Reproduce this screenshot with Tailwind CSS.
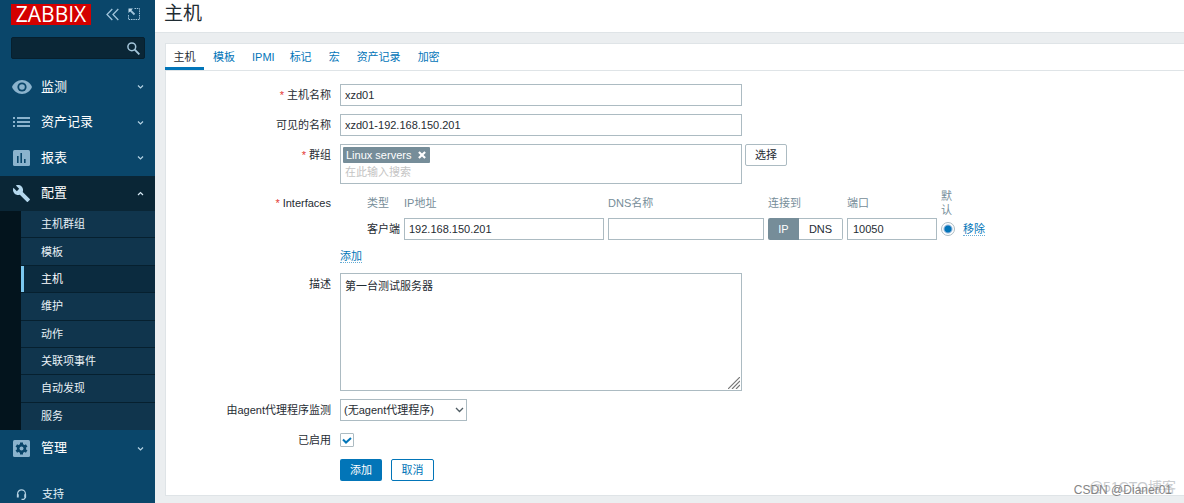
<!DOCTYPE html>
<html lang="zh-CN">
<head>
<meta charset="utf-8">
<title>主机</title>
<meta name="viewport" content="width=device-width, initial-scale=1">
<script src="https://cdn.jsdelivr.net/npm/@tailwindcss/browser@4"></script>
</head>
<body class="relative flex min-h-screen overflow-x-hidden bg-[#ebeef0] font-['Liberation_Sans','Noto_Sans_CJK_SC',sans-serif] text-[11px] leading-[14px] text-[#1f2c33]">

<aside class="flex w-[155px] shrink-0 flex-col bg-[#0a466a] text-[#e4f1f8]">
  <div class="flex h-7 items-center pl-[11px]">
    <a href="#" aria-label="ZABBIX" class="flex h-[21px] w-20 items-center justify-center bg-[#d40000] font-['Open_Sans','Liberation_Sans',sans-serif] text-[21px] leading-[21px] text-white">ZABBIX</a>
    <button type="button" aria-label="收起" class="ml-[15px]"><svg class="size-[13px]" viewBox="0 0 13 13" fill="none" stroke="#9fc3da" stroke-width="1.3"><path d="M6.3 1 1 6.5l5.300 5.500M12.300 1 7 6.500l5.300 5.500"/></svg></button>
    <button type="button" aria-label="隐藏" class="ml-[9px]"><svg class="size-3" viewBox="0 0 12 12" fill="none" stroke="#9fc3da"><path d="M6.500.500h5v11H.500V6.500" stroke-dasharray="1.500 .8"/><path d="M2 2l4.500 4.500" stroke-width="1.800"/><path d="M.5.500h4.500l-4.500 4.500z" fill="#c4dceb" stroke="none"/></svg></button>
  </div>
  <form class="mx-[11px] mt-[9px] mr-[10px] flex h-[22px] items-center rounded-[2px] border border-[#06202f] bg-[#0a2636] pr-1">
    <input type="text" aria-label="搜索" class="h-full min-w-0 flex-1 bg-transparent px-1 outline-none">
    <button type="button" aria-label="搜索"><svg class="size-[13px]" viewBox="0 0 13 13" fill="none" stroke="#a3c5da"><circle cx="4.800" cy="4.800" r="3.900" stroke-width="1.500"/><path d="M7.700 7.700l4.700 4.700" stroke-width="1.900"/></svg></button>
  </form>
  <nav class="mt-[10px]">
    <div class="grid h-[142px] grid-rows-4 text-[13px] text-white">
      <a href="#" class="flex items-center pr-[11px] pl-3"><svg class="h-[14px] w-5" viewBox="0 0 20 14"><path d="M10 0C5.500 0 1.600 2.900 0 7c1.600 4.100 5.500 7 10 7s8.400-2.900 10-7c-1.600-4.100-5.500-7-10-7z" fill="#8bb3cd"/><circle cx="10" cy="7" r="4.600" fill="#0a466a"/><circle cx="10" cy="7" r="2.800" fill="#8bb3cd"/></svg><span class="ml-[9px] flex-1">监测</span><svg class="size-[7px]" viewBox="0 0 7 7" fill="none" stroke="#b5d2e3" stroke-width="1.200"><path d="M1 2.500l2.500 2.500L6 2.500"/></svg></a>
      <a href="#" class="flex items-center pr-[11px] pl-[13px]"><svg class="h-[10px] w-[17px]" viewBox="0 0 17 10" fill="#8bb3cd"><path d="M0 0h2v2H0zM4 0h13v2H4zM0 4h2v2H0zM4 4h13v2H4zM0 8h2v2H0zM4 8h13v2H4z"/></svg><span class="ml-[11px] flex-1">资产记录</span><svg class="size-[7px]" viewBox="0 0 7 7" fill="none" stroke="#b5d2e3" stroke-width="1.200"><path d="M1 2.500l2.500 2.500L6 2.500"/></svg></a>
      <a href="#" class="flex items-center pr-[11px] pl-[13px]"><svg class="h-4 w-[17px]" viewBox="0 0 17 16"><rect width="17" height="16" rx="1.500" fill="#8bb3cd"/><path d="M4 6h1.600v7H4zM7.400 3H9v10H7.400zM11 9h1.600v4H11z" fill="#0a466a"/></svg><span class="ml-[11px] flex-1">报表</span><svg class="size-[7px]" viewBox="0 0 7 7" fill="none" stroke="#b5d2e3" stroke-width="1.200"><path d="M1 2.500l2.500 2.500L6 2.500"/></svg></a>
      <a href="#" class="flex items-center bg-[#0a2636] pr-[11px] pl-[13px]"><svg class="size-[17px]" viewBox="1 1 22 22" fill="#b5d8ee"><path d="M22.700 19l-9.100-9.100c.9-2.300.4-5-1.500-6.900-2-2-5-2.400-7.400-1.300L9 6 6 9 1.600 4.700C.4 7.100.9 10.100 2.900 12.100c1.900 1.900 4.600 2.400 6.900 1.500l9.100 9.100c.4.4 1 .4 1.400 0l2.300-2.300c.5-.4.5-1.100.1-1.400z"/></svg><span class="ml-[11px] flex-1">配置</span><svg class="size-[7px]" viewBox="0 0 7 7" fill="none" stroke="#d5e8f3" stroke-width="1.200"><path d="M1 5l2.500-2.500L6 5"/></svg></a>
    </div>
    <div class="grid h-[219px] grid-rows-8 bg-[#03141d] pl-[21px] text-[#e8f1f6]">
      <a href="#" class="flex items-center border-b border-[#06202f] bg-[#10354d] pl-5">主机群组</a>
      <a href="#" class="flex items-center border-b border-[#06202f] bg-[#10354d] pl-5">模板</a>
      <a href="#" class="flex items-center border-b border-[#06202f] bg-[#0b2b3f] text-white"><span class="w-[3px] self-stretch bg-[#7cc8ef]"></span><span class="pl-[17px]">主机</span></a>
      <a href="#" class="flex items-center border-b border-[#06202f] bg-[#10354d] pl-5">维护</a>
      <a href="#" class="flex items-center border-b border-[#06202f] bg-[#10354d] pl-5">动作</a>
      <a href="#" class="flex items-center border-b border-[#06202f] bg-[#10354d] pl-5">关联项事件</a>
      <a href="#" class="flex items-center border-b border-[#06202f] bg-[#10354d] pl-5">自动发现</a>
      <a href="#" class="flex items-center bg-[#10354d] pl-5">服务</a>
    </div>
    <a href="#" class="flex h-9 items-center pr-[11px] pl-[13px] text-[13px] text-white"><svg class="size-[17px]" viewBox="0 0 17 17"><rect width="17" height="17" rx="1.500" fill="#8bb3cd"/><g fill="#0a466a"><circle cx="8.500" cy="8.500" r="4.600"/><rect x="7" y="2.500" width="3" height="12"/><rect x="7" y="2.500" width="3" height="12" transform="rotate(60 8.500 8.500)"/><rect x="7" y="2.500" width="3" height="12" transform="rotate(120 8.500 8.500)"/></g><circle cx="8.500" cy="8.500" r="2" fill="#8bb3cd"/></svg><span class="ml-[11px] flex-1">管理</span><svg class="size-[7px]" viewBox="0 0 7 7" fill="none" stroke="#b5d2e3" stroke-width="1.200"><path d="M1 2.500l2.500 2.500L6 2.500"/></svg></a>
    <a href="#" class="mt-5 flex h-4 items-center pl-4"><svg class="size-[11px]" viewBox="0 0 11 11" fill="none" stroke="#b5d2e3" stroke-width="1.200"><path d="M1.600 7V4.800a3.900 3.900 0 0 1 7.800 0V8.500L7.800 10.300H5.500"/><path d="M1.800 5.200v3.200M9.200 5.200v3.200" stroke-width="1.900"/></svg><span class="ml-[15px]">支持</span></a>
  </nav>
</aside>

<main class="flex min-w-0 flex-1 flex-col">
  <header class="flex h-[33px] items-start border-b border-[#dfe4e7] bg-white pt-[3px] pl-[9px]">
    <h1 class="text-[19px] leading-[22px]">主机</h1>
  </header>
  <section class="mt-[10px] ml-[10px] border border-r-0 border-[#dfe4e7] bg-white pb-[14px]">
    <nav class="flex h-[27px] items-stretch border-b border-[#dfe4e7] text-[#0275b8]">
      <a href="#" class="-ml-px flex w-[39px] items-center justify-center border-y-[3px] border-t-transparent border-b-[#0275b8] text-[#1f2c33]">主机</a>
      <a href="#" class="ml-[9px] flex items-center">模板</a>
      <a href="#" class="ml-[17px] flex items-center">IPMI</a>
      <a href="#" class="ml-[15px] flex items-center">标记</a>
      <a href="#" class="ml-[17px] flex items-center">宏</a>
      <a href="#" class="ml-[17px] flex items-center">资产记录</a>
      <a href="#" class="ml-[17px] flex items-center">加密</a>
    </nav>
    <form class="grid grid-cols-[165px_minmax(0,1fr)] gap-x-[9px] gap-y-2 pt-[13px]">
      <label for="host" class="pt-1 text-right"><span class="mr-[3px] text-[#e33734]">*</span>主机名称</label>
      <input id="host" type="text" value="xzd01" class="h-[22px] w-full max-w-[402px] border border-[#acbbc2] bg-white px-1 outline-none">

      <label for="visible" class="pt-1 text-right">可见的名称</label>
      <input id="visible" type="text" value="xzd01-192.168.150.201" class="h-[22px] w-full max-w-[402px] border border-[#acbbc2] bg-white px-1 outline-none">

      <label for="groups" class="pt-1 text-right"><span class="mr-[3px] text-[#e33734]">*</span>群组</label>
      <div class="flex items-start gap-[3px]">
        <div class="h-10 w-full max-w-[402px] border border-[#acbbc2] px-[2px] pt-[2px]">
          <div class="flex h-4 w-[87px] items-center justify-between rounded-[1px] bg-[#768d99] pr-1 pl-[3px] text-white"><span>Linux servers</span><button type="button" aria-label="移除 Linux servers"><svg class="size-2" viewBox="0 0 9 9" stroke="#fff" stroke-width="2.400"><path d="M1 1l7 7M8 1L1 8"/></svg></button></div>
          <input id="groups" type="text" placeholder="在此输入搜索" class="block h-[18px] w-full bg-transparent px-[2px] outline-none placeholder:text-[#c4c4c4]">
        </div>
        <button type="button" class="h-[22px] w-[42px] shrink-0 rounded-[2px] border border-[#acbbc2] bg-white">选择</button>
      </div>

      <div class="pt-1 text-right"><span class="mr-[3px] text-[#e33734]">*</span>Interfaces</div>
      <div class="-mt-1">
        <table class="w-[648px] table-fixed text-left">
          <colgroup><col class="w-16"><col class="w-[204px]"><col class="w-40"><col class="w-[79px]"><col class="w-[94px]"><col class="w-[22px]"><col></colgroup>
          <thead class="text-[#768d99]">
            <tr class="h-[30px]">
              <th class="pl-[27px] font-normal">类型</th><th class="font-normal">IP地址</th><th class="font-normal">DNS名称</th><th class="font-normal">连接到</th><th class="font-normal">端口</th><th class="pr-[9px] font-normal">默认</th><th></th>
            </tr>
          </thead>
          <tbody>
            <tr class="h-[22px]">
              <td class="pl-[27px]">客户端</td>
              <td class="pr-1"><input aria-label="IP地址" type="text" value="192.168.150.201" class="block h-[22px] w-full border border-[#acbbc2] px-1 outline-none"></td>
              <td class="pr-1"><input aria-label="DNS名称" type="text" class="block h-[22px] w-full border border-[#acbbc2] px-1 outline-none"></td>
              <td class="pr-1"><div class="flex h-[22px]"><button type="button" class="w-[31px] rounded-l-[2px] bg-[#768d99] text-white">IP</button><button type="button" class="flex-1 rounded-r-[2px] border border-l-0 border-[#acbbc2] bg-white">DNS</button></div></td>
              <td class="pr-1"><input aria-label="端口" type="text" value="10050" class="block h-[22px] w-full border border-[#acbbc2] px-[5px] outline-none"></td>
              <td><input aria-label="默认" type="radio" checked class="block size-[14px] appearance-none rounded-full border border-[#acbbc2] bg-white bg-radial from-[#0275b8] from-[3px] to-white to-[5px]"></td>
              <td><a href="#" class="border-b border-dotted border-[#0275b8]/60 text-[#0275b8]">移除</a></td>
            </tr>
          </tbody>
        </table>
        <div class="mt-[9px] h-4"><a href="#" class="border-b border-dotted border-[#0275b8]/60 text-[#0275b8]">添加</a></div>
      </div>

      <label for="desc" class="pt-1 text-right">描述</label>
      <div class="relative h-[118px] w-full max-w-[402px]">
        <textarea id="desc" class="block h-full w-full resize-none border border-[#acbbc2] px-1 pt-[5px] outline-none">第一台测试服务器</textarea>
        <svg class="pointer-events-none absolute right-[2px] bottom-[2px] size-3" viewBox="0 0 12 12" stroke="#777" stroke-width="1.200"><path d="M0 12L12 0M4 12l8-8M8 12l4-4"/></svg>
      </div>

      <label for="proxy" class="pt-1 text-right">由agent代理程序监测</label>
      <div class="relative w-[127px]">
        <select id="proxy" class="block h-[22px] w-full appearance-none border border-[#acbbc2] bg-white pr-4 pl-[3px] outline-none"><option>(无agent代理程序)</option></select>
        <svg class="pointer-events-none absolute top-2 right-[3px] h-[6px] w-[9px]" viewBox="0 0 9 6" fill="none" stroke="#4f5c63" stroke-width="1.300"><path d="M1 1l3.500 3.500L8 1"/></svg>
      </div>

      <label for="enabled" class="pt-1 text-right">已启用</label>
      <div class="relative h-[22px] pt-1">
        <input id="enabled" type="checkbox" checked class="block size-[14px] appearance-none rounded-[1px] border border-[#acbbc2] bg-white">
        <svg class="pointer-events-none absolute top-2 left-[2px] h-[7px] w-[10px]" viewBox="0 0 10 7" fill="none" stroke="#0275b8" stroke-width="2"><path d="M1 2.500l3 3L9 1"/></svg>
      </div>

      <div class="col-start-2 flex gap-[9px]">
        <button type="submit" class="h-[22px] w-[42px] rounded-[2px] bg-[#0275b8] text-white">添加</button>
        <button type="button" class="h-[22px] w-[43px] rounded-[2px] border border-[#0275b8] bg-white text-[#0275b8]">取消</button>
      </div>
    </form>
  </section>
</main>

<div class="pointer-events-none absolute right-2 bottom-[6px] text-[14px] leading-5 text-[#c9cccf]">@51CTO博客</div>
<div class="pointer-events-none absolute right-3 bottom-[6px] text-[12px] text-[#858585]">CSDN @Dianer01</div>
</body>
</html>
